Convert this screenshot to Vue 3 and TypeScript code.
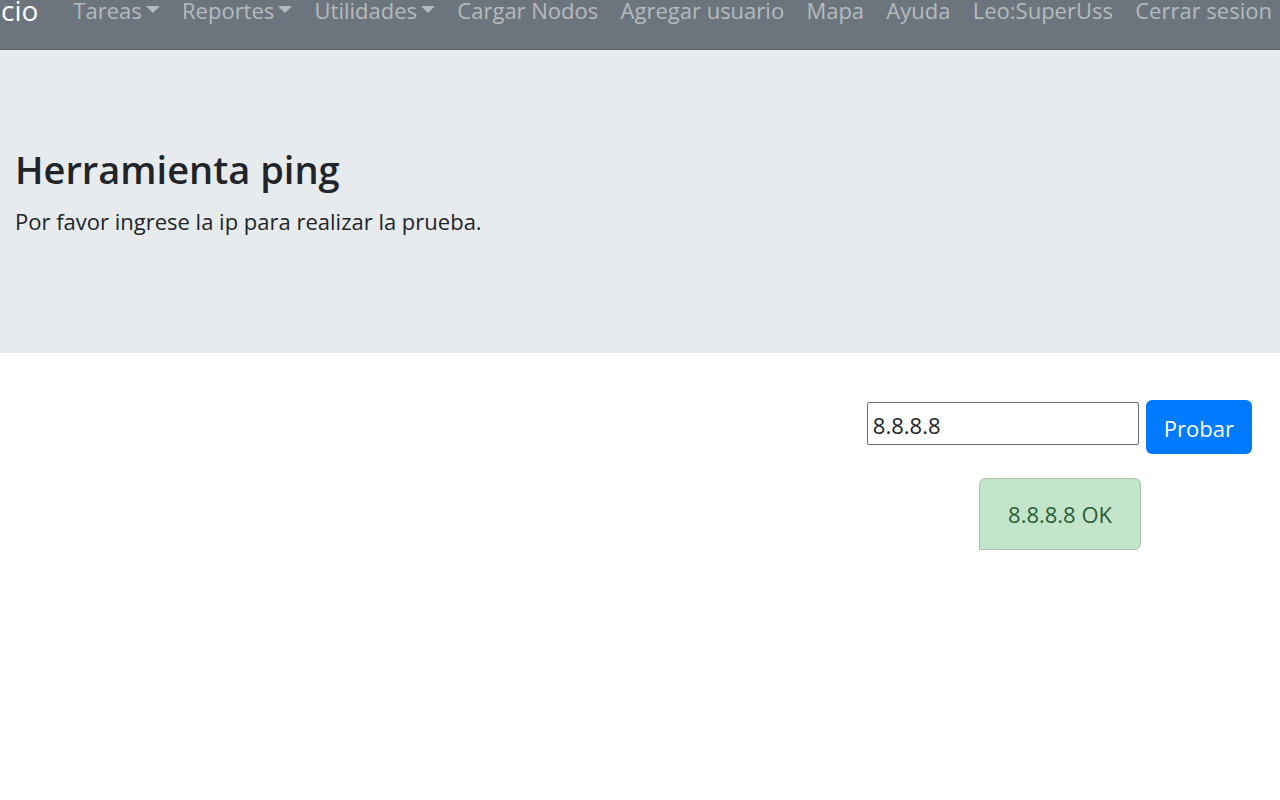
<script setup lang="ts">
import { ref } from 'vue'

interface NavItem {
  label: string
  menu?: boolean
}

const items: NavItem[] = [
  { label: 'Tareas', menu: true },
  { label: 'Reportes', menu: true },
  { label: 'Utilidades', menu: true },
  { label: 'Cargar Nodos' },
  { label: 'Agregar usuario' },
  { label: 'Mapa' },
  { label: 'Ayuda' },
  { label: 'Leo:SuperUss' },
  { label: 'Cerrar sesion' },
]

const ip = ref('8.8.8.8')
const result = ref('8.8.8.8 OK')

function probe() {
  result.value = `${ip.value} OK`
}
</script>

<template>
  <div class="page">
    <nav class="navbar">
      <a class="brand" href="#">cio</a>
      <ul class="links">
        <li v-for="item in items" :key="item.label">
          <a class="link" :class="{ toggle: item.menu }" href="#">{{ item.label }}</a>
        </li>
      </ul>
    </nav>
    <header class="hero">
      <h1>Herramienta ping</h1>
      <p>Por favor ingrese la ip para realizar la prueba.</p>
    </header>
    <main class="tool">
      <form class="form" @submit.prevent="probe">
        <input v-model="ip" class="field" type="text" aria-label="Dirección ip" />
        <button class="submit" type="submit">Probar</button>
      </form>
      <output class="result">{{ result }}</output>
    </main>
  </div>
</template>

<style>
body {
  margin: 0;
  background: #fff;
}
</style>

<style scoped>
.page {
  color: #212529;
  font-family: 'Segoe UI', 'Open Sans', 'Noto Sans', sans-serif;
  font-size: 22px;
  line-height: 32px;
}

.navbar {
  display: flex;
  align-items: flex-start;
  gap: 35px;
  padding: 0 8px 29px 1px;
  border-bottom: 1px solid #5f666d;
  background: #6c757d;
  line-height: 20px;
}

.brand {
  color: #fff;
  font-size: 28px;
  text-decoration: none;
}

.links {
  display: flex;
  flex: 1;
  justify-content: space-between;
  margin: 0;
  padding: 0;
  list-style: none;
  white-space: nowrap;
}

.link {
  display: flex;
  align-items: flex-start;
  color: #b5babe;
  text-decoration: none;
}

.toggle::after {
  margin: 6px 0 0 4px;
  border: 7px solid transparent;
  border-top-color: currentColor;
  border-bottom: 0;
  content: '';
}

.hero {
  padding: 95px 15px 116px;
  background: #e8ebee;
}

h1 {
  margin: 0 0 12px;
  font-size: 38px;
  font-weight: 600;
  line-height: 48px;
}

.hero p {
  margin: 0;
}

.tool {
  display: flex;
  flex-direction: column;
  align-items: flex-end;
  padding: 47px 28px;
}

.form {
  display: flex;
  align-items: flex-start;
  gap: 7px;
}

.field {
  box-sizing: border-box;
  width: 272px;
  height: 43px;
  margin-top: 2px;
  padding: 2px 5px 0;
  border: 1px solid #6b6b6b;
  border-radius: 2px;
  background: #fff;
  color: #212529;
  font: inherit;
}

.submit {
  box-sizing: border-box;
  height: 54px;
  padding: 2px 18px 0;
  border: 0;
  border-radius: 6px;
  background: #007bff;
  color: #fff;
  font: inherit;
}

.result {
  margin: 24px 111px 0 0;
  padding: 19px 28px;
  border: 1px solid #a9c4b0;
  border-radius: 6px 6px 6px 0;
  background: #c3e6cb;
  color: #2b5c37;
}
</style>
